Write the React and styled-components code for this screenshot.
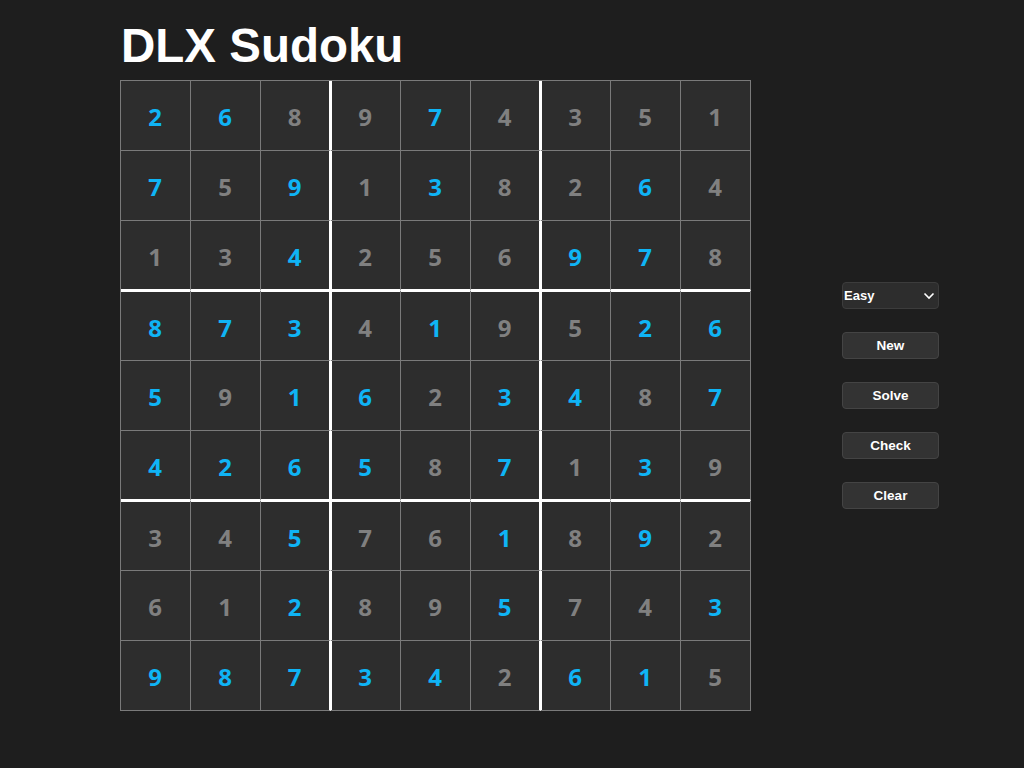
import React, { useState } from "react";
import styled, { createGlobalStyle } from "styled-components";

const GlobalStyle = createGlobalStyle`
  html, body {
    margin: 0;
    padding: 0;
    background: #1e1e1e;
  }
  body {
    font-family: "Liberation Sans", Arial, sans-serif;
    color: #fff;
  }
`;

// value + whether the cell was filled by the player/solver (blue)
const puzzle = [
  "2b6b8g9g7b4g3g5g1g",
  "7b5g9b1g3b8g2g6b4g",
  "1g3g4b2g5g6g9b7b8g",
  "8b7b3b4g1b9g5g2b6b",
  "5b9g1b6b2g3b4b8g7b",
  "4b2b6b5b8g7b1g3b9g",
  "3g4g5b7g6g1b8g9b2g",
  "6g1g2b8g9g5b7g4g3b",
  "9b8b7b3b4b2g6b1b5g",
].map((row) => {
  const cells = [];
  for (let i = 0; i < row.length; i += 2) {
    cells.push({ value: row[i], filled: row[i + 1] === "b" });
  }
  return cells;
});

const Page = styled.div`
  min-height: 768px;
  box-sizing: border-box;
  padding: 19px 0 0 120px;
`;

const Title = styled.h1`
  margin: 0 0 7px 1px;
  font-family: "Liberation Sans", Arial, sans-serif;
  font-size: 47.5px;
  font-weight: 700;
  line-height: 54px;
  color: #fff;
`;

const Main = styled.div`
  display: flex;
  align-items: center;
  gap: 91px;
`;

const Board = styled.div`
  display: grid;
  grid-template-columns: repeat(9, 70px);
  grid-auto-rows: 70px;
  border-left: 1px solid #7a7a7a;
  border-top: 1px solid #7a7a7a;
`;

const Cell = styled.div`
  box-sizing: border-box;
  display: flex;
  align-items: center;
  justify-content: center;
  background: #2d2d2d;
  border-right: ${(p) => (p.$thickRight ? "2px solid #fff" : "1px solid #7a7a7a")};
  border-bottom: ${(p) => (p.$thickBottom ? "2px solid #fff" : "1px solid #7a7a7a")};
  box-shadow: ${(p) =>
    [
      p.$thickLeft ? "inset 1px 0 0 #fff" : null,
      p.$thickTop ? "inset 0 1px 0 #fff" : null,
    ]
      .filter(Boolean)
      .join(", ") || "none"};
  font-family: "Open Sans", "Noto Sans", sans-serif;
  font-size: 24px;
  font-weight: 700;
  color: ${(p) => (p.$filled ? "#0fb4f5" : "#808080")};
  padding-top: ${(p) => (p.$thickTop ? "3px" : "2px")};
  padding-right: 1px;
`;

const Controls = styled.div`
  display: flex;
  flex-direction: column;
  gap: 23px;
  width: 97px;
`;

const SelectWrap = styled.div`
  position: relative;
  height: 27px;
`;

const Select = styled.select`
  appearance: none;
  width: 100%;
  height: 27px;
  box-sizing: border-box;
  padding: 0 0 0 1px;
  background: #2d2d2d;
  color: #fff;
  border: 1px solid #3c3c3c;
  border-radius: 4px;
  font-family: "Liberation Sans", Arial, sans-serif;
  font-size: 13px;
  font-weight: 700;
  outline: none;
`;

const Chevron = styled.svg`
  position: absolute;
  right: 4px;
  top: 10px;
  pointer-events: none;
`;

const Button = styled.button`
  height: 27px;
  box-sizing: border-box;
  background: #333;
  color: #fff;
  border: 1px solid #444;
  border-radius: 4px;
  font-family: "Liberation Sans", Arial, sans-serif;
  font-size: 13.5px;
  font-weight: 700;
  cursor: pointer;
`;

export default function App() {
  const [level, setLevel] = useState("easy");

  return (
    <Page>
      <GlobalStyle />
      <Title>DLX Sudoku</Title>
      <Main>
        <Board>
          {puzzle.map((row, r) =>
            row.map((cell, c) => (
              <Cell
                key={`${r}-${c}`}
                $filled={cell.filled}
                $thickRight={c === 2 || c === 5}
                $thickLeft={c === 3 || c === 6}
                $thickBottom={r === 2 || r === 5}
                $thickTop={r === 3 || r === 6}
              >
                {cell.value}
              </Cell>
            ))
          )}
        </Board>
        <Controls>
          <SelectWrap>
            <Select value={level} onChange={(e) => setLevel(e.target.value)}>
              <option value="easy">Easy</option>
              <option value="medium">Medium</option>
              <option value="hard">Hard</option>
            </Select>
            <Chevron width="12" height="8" viewBox="0 0 12 8">
              <path d="M1.5 1.5 L6 6 L10.5 1.5" fill="none" stroke="#fff" strokeWidth="1.6" />
            </Chevron>
          </SelectWrap>
          <Button>New</Button>
          <Button>Solve</Button>
          <Button>Check</Button>
          <Button>Clear</Button>
        </Controls>
      </Main>
    </Page>
  );
}
